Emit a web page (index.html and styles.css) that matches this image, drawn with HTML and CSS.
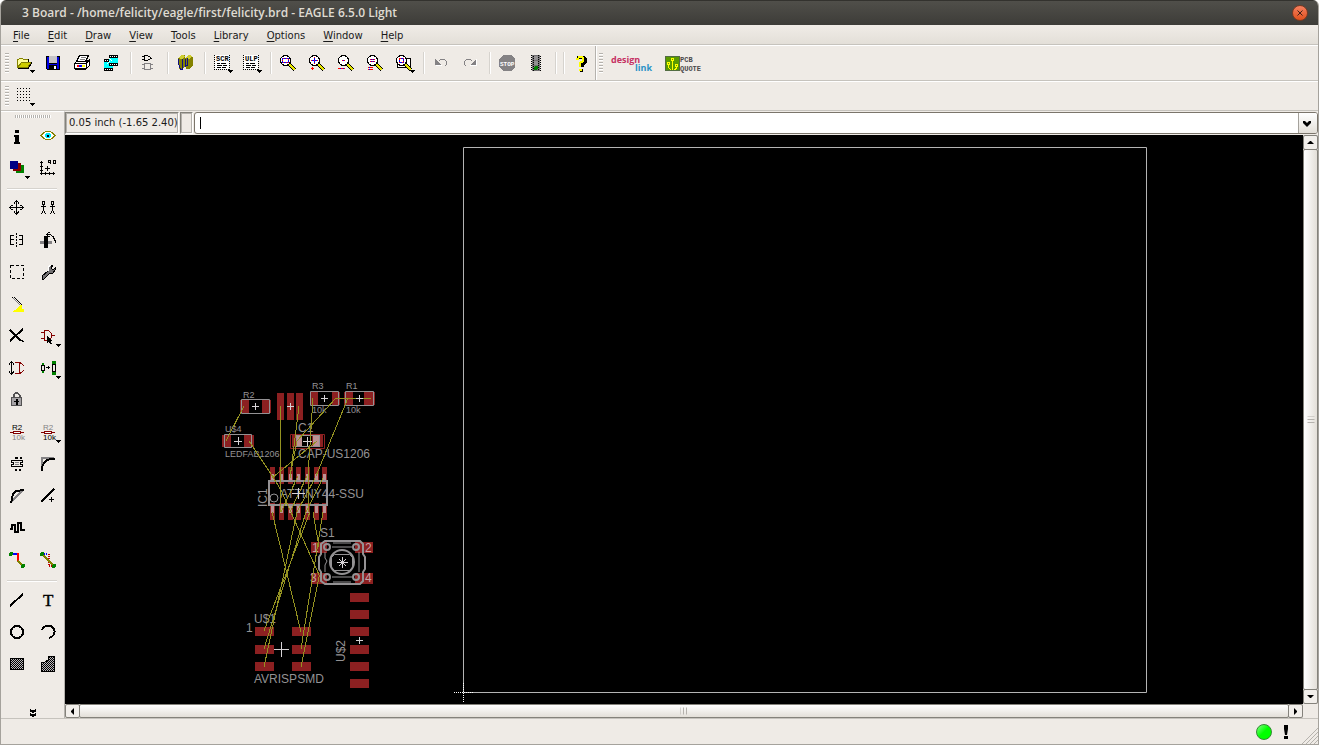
FILE: index.html
```html
<!DOCTYPE html>
<html lang="en">
<head>
  <meta charset="UTF-8">
  <meta name="viewport" content="width=device-width, initial-scale=1.0">
  <title>3 Board - /home/felicity/eagle/first/felicity.brd - EAGLE 6.5.0 Light</title>
  <link rel="stylesheet" href="styles.css">
</head>
<body>
  <div class="window">
    <header class="titlebar">
      <h1>3 Board - /home/felicity/eagle/first/felicity.brd - EAGLE 6.5.0 Light</h1>
      <button class="close" aria-label="Close"><svg width="16" height="16"><path d="M5.5 5.5l5 5m0-5l-5 5" stroke="#3c2018"/></svg></button>
    </header>

    <nav class="menubar">
      <a href="#"><u>F</u>ile</a>
      <a href="#"><u>E</u>dit</a>
      <a href="#"><u>D</u>raw</a>
      <a href="#"><u>V</u>iew</a>
      <a href="#"><u>T</u>ools</a>
      <a href="#"><u>L</u>ibrary</a>
      <a href="#"><u>O</u>ptions</a>
      <a href="#"><u>W</u>indow</a>
      <a href="#"><u>H</u>elp</a>
    </nav>

    <div class="toolbar actions">
      <span class="grip"></span>
      <button aria-label="Open"><svg width="29" height="24"><path d="M7.5 16V8.5h1l1-1h3l1 1h5v3" fill="#ffff9c" stroke="#848200"/><path d="M7.5 16.5l4-5h10l-4 5z" fill="#cece00" stroke="#848200"/><path d="M8 17.5h10l4-6M18.5 8v3" fill="none" stroke="#000"/><path class="dd" d="M20 19h5v1h-1v1h-1v1h-1v-1h-1v-1h-1z"/></svg></button>
      <button aria-label="Save"><svg width="29" height="24"><path d="M7 5h14v14H8l-1-1z" fill="#000"/><path d="M8 6h12v12H8z" fill="#0000e6"/><path d="M10 5h8v7h-8z" fill="#c6c3c6"/><path d="M10 12h8v1h-8zM10 14h8v5h-8z" fill="#000"/><path d="M15 15h2v3h-2z" fill="#fff"/></svg></button>
      <button aria-label="Print"><svg width="29" height="24"><path d="M11.5 4.5h9l-3 6h-9z" fill="#fff" stroke="#000"/><path d="M13 6.5h5M12 8.5h5" stroke="#848284"/><path d="M6.5 12.5l2-2h10l3-2v6l-4 4h-9l-2-1z" fill="#fff" stroke="#000"/><path d="M7 12.5h11l3-3M18.5 12v6M8 17.5h10" fill="none" stroke="#000"/><path d="M9 14h2v2H9z" fill="#f00"/><path d="M11 14h3v2h-3z" fill="#00f"/><path d="M14 14h3v2h-3z" fill="#ff0"/></svg></button>
      <button aria-label="CAM processor"><svg width="29" height="24"><path d="M12 4h9v9h-9zM7 8h9v12H7z" fill="#00ffff"/><path d="M12 4h9v3h-9zM12 12h9v3h-9zM7 8h5v3H7zM7 17h9v3H7z" fill="#000"/><path d="M13 5.5h8M13 13.5h8M8 9.5h4M8 18.5h8" stroke="#fff" stroke-dasharray="1 1"/><path d="M12 7l3 3M13 10l-3 3" stroke="#fff"/></svg></button>
      <i class="sep"></i>
      <button aria-label="Schematic"><svg width="29" height="24"><path d="M10.5 4.5h3l3 2v1l-3 2h-3zM8 5.5h3M8 8.5h3M16 7.5h2" fill="none" stroke="#000"/><path d="M10.5 12.5h6v6h-6zM8 13.5h2M8 17.5h2M17 13.5h2M17 17.5h2" fill="none" stroke="#848284"/></svg></button>
      <i class="sep"></i>
      <button aria-label="Library"><svg width="29" height="24"><path d="M14 7l4-3 4 2v9l-4 3h-3z" fill="#848200"/><path d="M7 7l4-3h3v12l-3 2H8z" fill="#848200"/><path d="M7 7l4-3 3 1-3 3zM14 7l4-3 3 1-3 3z" fill="#cece31"/><path d="M7.5 8v5l2 5h2V8M14.5 8v7l2-1V7" fill="none" stroke="#101084"/></svg></button>
      <i class="sep"></i>
      <button aria-label="Script"><svg width="29" height="24"><path d="M7 4h14v14H7z" fill="#fff"/><path d="M6.5 4v15M21.5 4v15M6 18.5h15" stroke="#000" stroke-dasharray="1 1"/><text class="tag" x="8" y="10">SCR</text><path d="M9 12.5h3m1 0h5M9 14.5h5m1 0h4M9 16.5h4m1 0h4" stroke="#000"/><path class="dd" d="M20 19h5v1h-1v1h-1v1h-1v-1h-1v-1h-1z"/></svg></button>
      <button aria-label="User program"><svg width="29" height="24"><path d="M7 4h14v14H7z" fill="#fff"/><path d="M6.5 4v15M21.5 4v15M6 18.5h15" stroke="#000" stroke-dasharray="1 1"/><text class="tag" x="8" y="10">ULP</text><path d="M9 12.5h3m1 0h5M9 14.5h5m1 0h4M9 16.5h4m1 0h4" stroke="#000"/><path class="dd" d="M20 19h5v1h-1v1h-1v1h-1v-1h-1v-1h-1z"/></svg></button>
      <i class="sep"></i>
      <button aria-label="Zoom to fit"><svg width="29" height="24"><path d="M15 13l6 6" stroke="#000" stroke-width="4"/><path d="M15 13l6 6" stroke="#e6e600" stroke-width="2"/><circle cx="11.5" cy="9.5" r="5" fill="#fff" stroke="#000"/><path d="M8.5 7.5h6v4h-6z" fill="none" stroke="#00f"/><path d="M8.5 7.5h6v4h-6z" fill="none" stroke="#f00" stroke-dasharray="1 2"/></svg></button>
      <button aria-label="Zoom in"><svg width="29" height="24"><path d="M15 13l6 6" stroke="#000" stroke-width="4"/><path d="M15 13l6 6" stroke="#e6e600" stroke-width="2"/><circle cx="11.5" cy="9.5" r="5" fill="#fff" stroke="#000"/><path d="M8 9.5h7M11.5 6v7" stroke="#00f"/><path d="M8 9.5h7M11.5 6v7" stroke="#f00" stroke-dasharray="1 2"/><path d="M8 17.5h3M9.5 16v3" stroke="#f00"/></svg></button>
      <button aria-label="Zoom out"><svg width="29" height="24"><path d="M15 13l6 6" stroke="#000" stroke-width="4"/><path d="M15 13l6 6" stroke="#e6e600" stroke-width="2"/><circle cx="11.5" cy="9.5" r="5" fill="#fff" stroke="#000"/><path d="M10 9.5h3M6 17.5h7" stroke="#f00"/><path d="M11 9.5h1M8 17.5h1m2 0h1" stroke="#00f"/></svg></button>
      <button aria-label="Redraw"><svg width="29" height="24"><path d="M15 13l6 6" stroke="#000" stroke-width="4"/><path d="M15 13l6 6" stroke="#e6e600" stroke-width="2"/><circle cx="11.5" cy="9.5" r="5" fill="#fff" stroke="#000"/><path d="M9 8.5h5M9 10.5h5M7 16.5h5M7 18.5h5" stroke="#f00"/><path d="M10 8.5h1m1 0h1M10 10.5h1m1 0h1M8 16.5h1M8 18.5h1" stroke="#00f"/></svg></button>
      <button aria-label="Zoom select"><svg width="29" height="24"><path d="M14.5 7.5h6v9h-13v-5h7z" fill="#fff" stroke="#000"/><path d="M15 13l6 6" stroke="#000" stroke-width="4"/><path d="M15 13l6 6" stroke="#e6e600" stroke-width="2"/><circle cx="11.5" cy="9.5" r="5" fill="#fff" stroke="#000"/><path d="M9.5 7.5h4v4h-4z" fill="none" stroke="#00f"/><path d="M9.5 7.5h4v4h-4z" fill="none" stroke="#f00" stroke-dasharray="1 2"/><path class="dd" d="M20 19h5v1h-1v1h-1v1h-1v-1h-1v-1h-1z"/></svg></button>
      <i class="sep"></i>
      <button aria-label="Undo"><svg width="29" height="24"><path d="M9 14.5h6" stroke="#fff"/><path d="M11.5 10.5l2-2h4l2 2v3l-2 2" fill="none" stroke="#848284"/><path d="M8 8v6h6z" fill="#848284"/></svg></button>
      <button aria-label="Redo"><svg width="29" height="24"><path d="M14 14.5h7M20.5 8v7" stroke="#fff"/><path d="M16.5 10.5l-2-2h-4l-2 2v3l2 2" fill="none" stroke="#848284"/><path d="M20 8v6h-6z" fill="#848284"/></svg></button>
      <i class="sep"></i>
      <button aria-label="Stop"><svg width="29" height="24"><path d="M10 4h8l4 4v8l-4 4h-8l-4-4V8z" fill="#848284"/><text class="stop" x="7" y="15">STOP</text></svg></button>
      <button aria-label="Go"><svg width="29" height="24"><path d="M10 4h8v16h-8z" fill="#737173"/><path d="M9.5 4v16M11.5 5v15M16.5 4v16M18.5 5v15" stroke="#000" stroke-dasharray="1 1"/><path d="M12 5h4v4h-4zM12 10h4v4h-4z" fill="#949294"/><circle cx="14" cy="17" r="2" fill="#008200"/></svg></button>
      <i class="sep"></i><i class="sep"></i>
      <button aria-label="Help"><svg width="29" height="24"><path d="M10 7l2-1h4l2 2v3l-3 3v2M13 19h3" fill="none" stroke="#000" stroke-width="3"/><path d="M9 8h2l1-2h3l1 1v3l-3 2v4M12 18.5h3" fill="none" stroke="#ff0" stroke-width="2"/></svg></button>
      <span class="bar-end"></span>
      <span class="grip"></span>
      <button class="link" aria-label="designlink"><svg width="50" height="24"><text class="design" x="6" y="12">design</text><text class="linkword" x="30" y="20">link</text></svg></button>
      <button class="quote" aria-label="PCB quote"><svg width="44" height="24"><path d="M3 5h15v15H3z" fill="#526d42"/><path d="M4 6h13v13H4z" fill="#5a9a00"/><path d="M10.5 9v10M6.5 13v3l2 3M14.5 15v2l-2 2" fill="none" stroke="#ff0"/><path d="M9.5 7.5h2v2h-2zM5.5 11.5h2v2h-2zM13.5 13.5h2v2h-2z" fill="#5a9a00" stroke="#ff0"/><text class="tag grey" x="18" y="11">PCB</text><text class="tag grey" x="18" y="20">QUOTE</text></svg></button>
    </div>

    <div class="toolbar params">
      <span class="grip"></span>
      <button aria-label="Grid"><svg width="29" height="24"><path d="M7 4.5h14M7 7.5h14M7 10.5h14M7 13.5h14M7 16.5h14" stroke="#000" stroke-dasharray="1 2"/><path class="dd" d="M20 19h5v1h-1v1h-1v1h-1v-1h-1v-1h-1z"/></svg></button>
    </div>

    <main>
      <aside class="palette">
        <span class="hgrip"></span>
        <div class="tools">
          <button aria-label="Info"><svg width="31" height="32"><path d="M14 10h4v3h-4zM13 15h5v7h1v2h-6v-2h1v-5h-1z"/></svg></button>
          <button aria-label="Show"><svg width="31" height="32"><path d="M8 15.5h1l3-3 2-1h4l2 1 3 3-3 3-2 1h-4l-2-1-3-3" fill="#fff" stroke="#848200"/><circle cx="16" cy="15.5" r="3" fill="#00e6ff"/><path d="M15 15h2v2h-2z"/></svg></button>
          <button aria-label="Display"><svg width="31" height="32"><path d="M15 13h8v8h-8z" fill="#008200"/><path d="M12 11h8v8h-8z" fill="#840000"/><path d="M9 9h8v8H9z" fill="#000084"/><path class="dd" d="M24 24h5v1h-1v1h-1v1h-1v-1h-1v-1h-1z"/></svg></button>
          <button aria-label="Mark"><svg width="31" height="32"><path d="M9.5 9v14M8 21.5h15M8 10.5h3M8 14.5h3M8 18.5h3M13.5 20v3M17.5 20v3M21.5 20v3M13 16.5h5M15.5 14v5M18.5 12V8.5h-2v2h2M21.5 8.5h2v3h-2z" fill="none" stroke="#000"/></svg></button>
          <i class="rule"></i>
          <button aria-label="Move"><svg width="31" height="32"><path d="M8 15.5h15M15.5 8v15M13 11.5l2.5-3 2.5 3M13 19.5l2.5 3 2.5-3M11.5 13l-3 2.5 3 2.5M19.5 13l3 2.5-3 2.5" fill="none" stroke="#000"/></svg></button>
          <button aria-label="Copy"><svg width="31" height="32"><path d="M10.5 9.5h2v3h-2zM9 14.5h5M11.5 13v5l-2 4M11.5 18l2 4M19.5 9.5h2v3h-2zM18 14.5h5M20.5 13v5l-2 4M20.5 18l2 4" fill="none" stroke="#000"/></svg></button>
          <button aria-label="Mirror"><svg width="31" height="32"><path d="M15.5 9v15" stroke="#000" stroke-dasharray="2 1"/><path d="M13 11.5H9.5v9H13M9 15.5h4M18 11.5h3.5v9H18M18 15.5h4" fill="none" stroke="#000"/></svg></button>
          <button aria-label="Rotate"><svg width="31" height="32"><path d="M8 17h12v3H8z" fill="#848284"/><path d="M12 12h4v12h-4z"/><path d="M14 10.5h4l3 2 2 4v2M17.5 8l-3 2.5 3 2.5" fill="none" stroke="#000"/></svg></button>
          <button aria-label="Group"><svg width="31" height="32"><path d="M9.5 9.5h13v13h-13z" fill="none" stroke="#000" stroke-dasharray="3 2"/></svg></button>
          <button aria-label="Change"><svg width="31" height="32"><path d="M10 20l6-5v-4l3-2h2l-2 3 2 2 2-2v2l-2 3h-3l-6 6h-2z" fill="#737173" stroke="#000"/><path d="M16 15v-4l3-2" fill="none" stroke="#fff"/></svg></button>
          <button aria-label="Paste"><svg width="31" height="32"><path d="M11.5 9.5l9 9M13.5 9.5l8 8" stroke="#000"/><path d="M12.5 10.5l8 8" stroke="#848284"/><path d="M19 17h2v4h2v3H12v-1l4-2z" fill="#ff0"/></svg></button>
          <span></span>
          <button aria-label="Delete"><svg width="31" height="32"><path d="M9 10l11 11" stroke="#000" stroke-width="2"/><path d="M22 9L9 21" stroke="#000" stroke-width="2"/><path d="M20 20l3 2" stroke="#000"/></svg></button>
          <button aria-label="Add"><svg width="31" height="32"><path d="M9 12.5h3M9 18.5h3M12.5 10.5h4l3 3v4l-3 3h-4zM20 15.5h3" fill="none" stroke="#840000"/><path d="M15 16v7l2-1 1 2h2l-1-3h2z"/><path class="dd" d="M24 24h5v1h-1v1h-1v1h-1v-1h-1v-1h-1z"/></svg></button>
          <button aria-label="Pinswap"><svg width="31" height="32"><path d="M10.5 10v12M8 12.5l2.5-3 2.5 3M8 19.5l2.5 3 2.5-3" fill="none" stroke="#000"/><path d="M14 10.5h5l4 3M14 21.5h5l4-3M18.5 10v12" fill="none" stroke="#840000"/></svg></button>
          <button aria-label="Replace"><svg width="31" height="32"><path d="M9.5 13.5h3v5h-3zM20.5 12.5h3v7h-3zM14 15.5h4M16.5 14v3" fill="none" stroke="#000"/><path d="M10 11h2v2h-2zM10 19h2v2h-2zM20 9h4v3h-4zM20 20h4v3h-4z" fill="#008200"/><path class="dd" d="M24 24h5v1h-1v1h-1v1h-1v-1h-1v-1h-1z"/></svg></button>
          <button aria-label="Lock"><svg width="31" height="32"><path d="M12.5 14v-3l2-2h2l2 2v3" fill="none" stroke="#525152" stroke-width="2"/><path d="M10.5 13.5h10v8h-10z" fill="#a5a2a5" stroke="#525152"/><path d="M15 15h2v6h-2zM13 17h5v1h-5z"/></svg></button>
          <span></span>
          <button aria-label="Name"><svg width="31" height="32"><text class="part" x="11" y="14">R2</text><text class="part grey" x="11" y="24">10k</text><path d="M9 16.5h14" stroke="#840000"/><path d="M12.5 15.5h7v2h-7z" fill="#fff" stroke="#840000"/></svg></button>
          <button aria-label="Value"><svg width="31" height="32"><text class="part grey" x="11" y="14">R2</text><text class="part" x="11" y="24">10k</text><path d="M9 16.5h14" stroke="#840000"/><path d="M12.5 15.5h7v2h-7z" fill="#fff" stroke="#840000"/><path class="dd" d="M24 24h5v1h-1v1h-1v1h-1v-1h-1v-1h-1z"/></svg></button>
          <button aria-label="Smash"><svg width="31" height="32"><path d="M10.5 12.5h11v2h-2v2h2v2h-11v-2h2v-2h-2z" fill="none" stroke="#000"/><path d="M14 9.5h3m2 0h2M14 21.5h2m2 0h2" stroke="#000" stroke-width="2"/><path d="M14 14.5h4M14 16.5h4" stroke="#848284"/></svg></button>
          <button aria-label="Miter"><svg width="31" height="32"><path d="M10 22V10h12" fill="none" stroke="#848284" stroke-width="2"/><path d="M10 23v-3c1-5 4-8 8-9h5" fill="none" stroke="#000" stroke-width="2"/></svg></button>
          <button aria-label="Split"><svg width="31" height="32"><path d="M10 22L22 10" stroke="#848284" stroke-width="2"/><path d="M10 23l2-9 3-3 8-1" fill="none" stroke="#000" stroke-width="2"/></svg></button>
          <button aria-label="Optimize"><svg width="31" height="32"><path d="M9 22L22 9" stroke="#000" stroke-width="2"/><path d="M17 19.5h5M19.5 17v5" stroke="#000"/></svg></button>
          <button aria-label="Meander"><svg width="31" height="32"><path d="M9 17h2v-4h3v7h3v-9h3v7h4" fill="none" stroke="#000" stroke-width="2"/></svg></button>
          <span></span>
          <button aria-label="Route"><svg width="31" height="32"><path d="M10 10h6" stroke="#00f" stroke-width="2"/><path d="M17 9v8" stroke="#f00" stroke-width="2"/><path d="M17 17l5 5" stroke="#848200" stroke-width="2"/><circle cx="10" cy="10" r="2" fill="#008200"/><circle cx="22" cy="22" r="2" fill="#008200"/></svg></button>
          <button aria-label="Ripup"><svg width="31" height="32"><path d="M10 10h6" stroke="#00f" stroke-width="2" stroke-dasharray="1 1"/><path d="M17 10v12h5" fill="none" stroke="#c00000" stroke-width="2" stroke-dasharray="1 1"/><path d="M10 10l12 12" stroke="#848200" stroke-width="2"/><circle cx="10" cy="10" r="2" fill="#008200"/><circle cx="22" cy="22" r="2" fill="#008200"/></svg></button>
          <i class="rule"></i>
          <button aria-label="Wire"><svg width="31" height="32"><path d="M9 22L22 10" stroke="#000" stroke-width="2"/></svg></button>
          <button aria-label="Text"><svg width="31" height="32"><text class="letter" x="11" y="22">T</text></svg></button>
          <button aria-label="Circle"><svg width="31" height="32"><circle cx="16" cy="16" r="6" fill="none" stroke="#000" stroke-width="2"/></svg></button>
          <button aria-label="Arc"><svg width="31" height="32"><path d="M10 14c2-5 9-6 12-1 2 4-1 8-5 9" fill="none" stroke="#000" stroke-width="2"/></svg></button>
          <button aria-label="Rectangle"><svg width="31" height="32"><defs><pattern id="dots" width="2" height="2" patternUnits="userSpaceOnUse"><path d="M0 0h2v2H0z" fill="#bdbabd"/><path d="M0 0h1v1H0zM1 1h1v1H1z" fill="#000"/></pattern></defs><path d="M9.5 10.5h13v11h-13z" fill="url(#dots)" stroke="#000"/></svg></button>
          <button aria-label="Polygon"><svg width="31" height="32"><path d="M9.5 23.5v-9h3l4-3v-3h6v15z" fill="url(#dots)" stroke="#000"/></svg></button>
        </div>
        <button class="more" aria-label="More tools"><svg width="31" height="12"><path d="M13 4l3 2 3-2M13 8l3 2 3-2" fill="none" stroke="#000" stroke-width="2"/></svg></button>
      </aside>

      <section class="editor">
        <div class="command">
          <output class="coords">0.05 inch (-1.65 2.40)</output>
          <span class="slot"></span>
          <div class="combo">
            <span class="caret"></span>
            <input type="text" aria-label="Command">
            <button aria-label="History"><svg width="18" height="20"><path d="M4 8h2l2 2 2-2h2v2l-4 4-4-4z"/></svg></button>
          </div>
        </div>

        <div class="workspace">
          <div class="canvas">
            <svg class="board" width="1238" height="569" viewBox="65 135 1238 569">
              <!-- board outline and origin -->
              <path d="M463.5 147.5h683v545h-683z" fill="none" stroke="#b4b4b4"/>
              <path d="M454 692.5h20M463.5 683v20" stroke="#fff" stroke-dasharray="1 1"/>

              <!-- pads -->
              <g class="pads">
                <path d="M240 400h9v13h-9zM262 400h9v13h-9z"/>
                <path d="M277 393h7v27h-7zM287 393h7v27h-7zM296 393h7v27h-7z"/>
                <path d="M310 392h8v13h-8zM332 392h8v13h-8zM344 392h9v13h-9zM364 392h11v13h-11z"/>
                <path d="M222 435h9v12h-9zM244 435h10v12h-10zM292 435h10v12h-10zM312 435h11v12h-11z"/>
                <path d="M270 467h5v17h-5zM279 467h5v17h-5zM288 467h5v17h-5zM296 467h5v17h-5zM305 467h5v17h-5zM314 467h5v17h-5zM322 467h5v17h-5z"/>
                <path d="M270 503h5v17h-5zM279 503h5v17h-5zM288 503h5v17h-5zM296 503h5v17h-5zM305 503h5v17h-5zM314 503h5v17h-5zM322 503h5v17h-5z"/>
                <path d="M311 542h16v11h-16zM311 573h16v11h-16zM355 542h18v11h-18zM355 573h18v11h-18z"/>
                <path d="M255 627h19v9h-19zM255 645h19v9h-19zM255 662h19v9h-19zM292 627h19v9h-19zM292 645h19v9h-19zM292 662h19v9h-19z"/>
                <path d="M350 593h19v9h-19zM350 610h19v9h-19zM350 627h19v9h-19zM350 645h19v9h-19zM350 662h19v9h-19zM350 679h19v9h-19z"/>
              </g>
              <path d="M290.5 434.5h34v14h-34z" fill="none" stroke="#8c2021"/>
              <g fill="#bd9294">
                <path d="M296 435h6v12h-6zM313 435h7v12h-7z"/>
                <path d="M271 474h3v6h-3zM280 474h3v6h-3zM289 474h3v6h-3zM297 474h3v6h-3zM306 474h3v6h-3zM315 474h3v6h-3zM323 474h3v6h-3z"/>
                <path d="M271 506h3v7h-3zM280 506h3v7h-3zM289 506h3v7h-3zM297 506h3v7h-3zM306 506h3v7h-3zM315 506h3v7h-3zM323 506h3v7h-3z"/>
              </g>

              <!-- package outlines -->
              <g class="outline">
                <path d="M241.5 399.5h28v14h-28zM310.5 391.5h28v14h-28zM345.5 391.5h28v14h-28zM224.5 434.5h27v13h-27zM296.5 435.5h23v11h-23z"/>
                <path d="M269 481h58v24h-58z" stroke-width="2"/>
                <circle cx="274" cy="498" r="4"/>
                <path d="M325 541h35l3 3v10l2 3v12l-2 3v9l-3 3h-35l-4-3v-9l-2-3v-12l2-3v-10z" stroke-width="2"/>
                <path d="M333 543h18M332 547h20M332 577h20M333 582h18M325 552v6l2 3-2 4v7M359 552v20"/>
                <path d="M334.5 554.5h15l3 3v10l-3 3h-15l-3-3v-10z"/>
                <circle cx="342" cy="562" r="12" stroke-width="2"/>
                <g stroke-width="2"><circle cx="327" cy="547" r="3"/><circle cx="356" cy="547" r="3"/><circle cx="327" cy="577" r="3"/><circle cx="356" cy="577" r="3"/></g>
              </g>

              <!-- names and values -->
              <g class="small">
                <text x="243" y="398">R2</text>
                <text x="312" y="389">R3</text>
                <text x="346" y="389">R1</text>
                <text x="312" y="413">10k</text>
                <text x="346" y="413">10k</text>
                <text x="225" y="432">U$4</text>
                <text x="225" y="457">LEDFAB1206</text>
              </g>
              <g class="label">
                <text x="298" y="432">C1</text>
                <text x="298" y="458">CAP-US1206</text>
                <text x="280" y="498">ATTINY44-SSU</text>
                <text transform="translate(267 507) rotate(-90)">IC1</text>
                <text x="320" y="537">S1</text>
                <text x="254" y="623">U$1</text>
                <text x="246" y="632">1</text>
                <text x="254" y="683">AVRISPSMD</text>
                <text transform="translate(345 662) rotate(-90)">U$2</text>
              </g>
              <g class="label pin">
                <text x="312" y="552">1</text>
                <text x="365" y="552">2</text>
                <text x="310" y="582">3</text>
                <text x="365" y="582">4</text>
              </g>

              <!-- airwires -->
              <path class="airwire" d="M244 406L226 441M280 406V512M299 406L290 478M313 398L308 476V512M371 398H336L297 441L290 476M348 398L316 476M249 441L271 474L281 490L320 577M317 441L272 478M272 512L301 632M315 478L297 512L264 667M323 478L306 512L264 649M310 512L264 631M323 512L301 649M313 512L319 547M319 577L301 667M298 476L281 512M307 476L290 512"/>

              <!-- part origins -->
              <path class="origin" d="M252 406.5h7M255.5 403v7M287 406.5h7M290.5 403v7M321 398.5h7M324.5 395v7M356 398.5h7M359.5 395v7M234 441.5h8M238.5 437v8M303 441.5h9M307.5 437v9M292 493.5h13M298.5 488v11M337 562.5h11M342.5 557v11M339 559l7 7m0-7l-7 7M274 649.5h15M281.5 642v15M356 640.5h7M359.5 637v7"/>
            </svg>
          </div>
          <div class="scroll vertical">
            <button aria-label="Scroll up"><svg width="13" height="13"><path d="M3 8h7L7 5H6z"/></svg></button>
            <span class="thumb"></span>
            <button aria-label="Scroll down"><svg width="13" height="13"><path d="M3 5h7L7 8H6z"/></svg></button>
          </div>
          <div class="scroll horizontal">
            <button aria-label="Scroll left"><svg width="13" height="12"><path d="M8 3v7L5 7V6z"/></svg></button>
            <span class="thumb"></span>
            <button aria-label="Scroll right"><svg width="13" height="12"><path d="M5 3v7l3-3V6z"/></svg></button>
          </div>
        </div>
      </section>
    </main>

    <footer class="statusbar">
      <span class="lamp"></span>
      <svg class="alert" width="8" height="16"><path d="M2 1h4v4L5 11H3L2 5zM2 12h4v3H2z"/></svg>
      <svg class="resize" width="16" height="16"><path d="M0 16L16 0M4 16L16 4M8 16l8-8M12 16l4-4" stroke="#b5b2ad"/></svg>
    </footer>
  </div>
</body>
</html>
```
FILE: styles.css
```css
* {
  box-sizing: border-box;
}

body {
  margin: 0;
  background: #fff;
  color: #1a1a1a;
  font-family: "DejaVu Sans", sans-serif;
  font-size: 10px;
}

button {
  margin: 0;
  padding: 0;
  border: 0;
  background: none;
}

svg {
  display: block;
}

.window {
  display: flex;
  flex-direction: column;
  height: 100vh;
  overflow: hidden;
  border: solid #a5a29c;
  border-width: 0 1px 1px;
  border-radius: 6px 6px 0 0;
  background: #efebe6;
}

/* title bar and menu */
.titlebar {
  display: flex;
  align-items: center;
  justify-content: space-between;
  height: 25px;
  padding: 0 10px 0 21px;
  border-top: 1px solid #33322e;
  background: linear-gradient(#504f4a, #3d3c38);
}

.titlebar h1 {
  margin: 0;
  color: #dfdbd2;
  font: 600 12px/22px "Open Sans", sans-serif;
}

.close {
  width: 16px;
  height: 16px;
  border: 1px solid #7a3a22;
  border-radius: 50%;
  background: linear-gradient(#f58060, #e0501c);
}

.close svg {
  margin: -1px;
}

.menubar {
  display: flex;
  height: 20px;
  padding-left: 3px;
  border-bottom: 1px solid #c6c3bd;
  background: linear-gradient(#f0ece7, #e3dfd8);
}

.menubar a {
  padding: 0 9px;
  color: #1a1a1a;
  line-height: 21px;
  text-decoration: none;
}

.menubar u {
  text-underline-offset: 2px;
}

/* toolbars */
.toolbar {
  display: flex;
  align-items: center;
  border-top: 1px solid #fff;
  border-bottom: 1px solid #c6c3bd;
}

.actions {
  height: 36px;
}

.params {
  height: 30px;
}

.toolbar svg,
.palette svg {
  shape-rendering: crispEdges;
}

.grip {
  width: 4px;
  height: 20px;
  margin: 0 1px 0 4px;
  background: repeating-linear-gradient(#b5b2ad 0 1px, #fff 1px 2px, #efebe6 2px 3px);
}

.sep {
  width: 8px;
  height: 22px;
  background: linear-gradient(90deg, transparent 4px, #d6d3ce 4px 5px, #fff 5px 6px, transparent 6px);
}

.bar-end {
  align-self: stretch;
  width: 2px;
  margin-left: -1px;
  border-left: 1px solid #b5b2ad;
  border-right: 1px solid #fff;
}

.bar-end + .grip {
  margin: 0 0 0 2px;
}

.link {
  margin-left: 2px;
}

.quote {
  margin-left: 7px;
}

.tag {
  font: bold 7px "Liberation Mono", monospace;
}

.stop {
  fill: #fff;
  font: bold 6px "Liberation Mono", monospace;
}

.grey {
  fill: #848284;
}

.tag.grey {
  fill: #4a494a;
}

.design {
  fill: #c63163;
  font: bold 9px "Open Sans", sans-serif;
}

.linkword {
  fill: #2992c6;
  font: bold 9px "Open Sans", sans-serif;
}

/* tool palette */
main {
  display: flex;
  flex: 1;
  min-height: 0;
}

.palette {
  display: flex;
  flex-direction: column;
  width: 64px;
  border-top: 1px solid #fff;
  border-right: 1px solid #b5b2ad;
}

.hgrip {
  width: 36px;
  height: 3px;
  margin: 3px 0 2px 14px;
  background: repeating-linear-gradient(90deg, #b5b2ad 0 1px, #fff 1px 2px);
}

.tools {
  display: grid;
  grid-template-columns: 31px 31px;
  grid-auto-rows: auto;
}

.rule {
  grid-column: 1 / -1;
  height: 8px;
  margin: 0 6px;
  background: linear-gradient(transparent 4px, #d6d3ce 4px 5px, #fff 5px 6px, transparent 6px);
}

.part {
  font: 8px "Liberation Sans", sans-serif;
}

.letter {
  font: 17px "Liberation Serif", serif;
  stroke: #000;
  stroke-width: 0.4;
}

.more {
  align-self: center;
  margin-top: auto;
}

/* command line */
.editor {
  display: flex;
  flex: 1;
  flex-direction: column;
  min-width: 0;
}

.command {
  display: flex;
  gap: 1px;
  height: 24px;
  padding: 1px 0;
}

.coords,
.slot {
  border: 1px solid;
  border-color: #84827b #fff #fff #84827b;
  box-shadow: inset 1px 1px #b5b2ad, inset -1px -1px #b5b2ad;
}

.coords {
  width: 114px;
  padding-left: 3px;
  line-height: 20px;
  white-space: nowrap;
}

.slot {
  width: 13px;
}

.combo {
  display: flex;
  flex: 1;
  align-items: center;
  border: 1px solid #7b756b;
  border-radius: 3px;
  background: #fff;
  overflow: hidden;
}

.caret {
  width: 1px;
  height: 12px;
  margin-left: 5px;
  background: #000;
}

.combo input {
  flex: 1;
  min-width: 0;
  border: 0;
  outline: 0;
  background: none;
  font: inherit;
}

.combo button {
  border-left: 1px solid #a5a29c;
  background: linear-gradient(#fff, #e3dfd8);
}

/* drawing area */
.workspace {
  display: grid;
  flex: 1;
  grid-template: minmax(0, 1fr) 14px / minmax(0, 1fr) 15px;
  min-height: 0;
}

.canvas {
  overflow: hidden;
  background: #000;
}

.pads {
  fill: #8c2021;
}

.outline {
  fill: none;
  stroke: #949294;
}

.small,
.label {
  fill: #949294;
  font: 9px "Liberation Sans", sans-serif;
}

.label {
  font-size: 12px;
}

.pin {
  fill: #c6a2a5;
}

.airwire {
  fill: none;
  stroke: #949221;
  shape-rendering: crispEdges;
}

.origin {
  stroke: #d6d3d6;
}

.scroll {
  display: flex;
  background: #d6d3ce;
}

.vertical {
  flex-direction: column;
}

.scroll button,
.thumb {
  border: 1px solid #84827b;
  border-radius: 2px;
  background: #f2efeb;
}

.thumb {
  position: relative;
  flex: 1;
}

.horizontal .thumb {
  margin: 0 -1px;
  background: linear-gradient(#fff, #e3dfd8);
}

.vertical .thumb {
  margin: -1px 0;
  background: linear-gradient(90deg, #fff, #e3dfd8);
}

.thumb::after {
  position: absolute;
  top: 50%;
  left: 50%;
  width: 7px;
  height: 7px;
  background: repeating-linear-gradient(90deg, #b5b2ad 0 1px, transparent 1px 3px);
  content: "";
  transform: translate(-50%, -50%);
}

.vertical .thumb::after {
  background: repeating-linear-gradient(#b5b2ad 0 1px, transparent 1px 3px);
}

/* status bar */
.statusbar {
  display: flex;
  align-items: center;
  justify-content: flex-end;
  height: 26px;
  border-top: 1px solid #c6c3bd;
}

.lamp {
  width: 16px;
  height: 16px;
  border: 1px solid #318a31;
  border-radius: 50%;
  background: linear-gradient(135deg, #8f8, #0f0 50%);
}

.alert {
  margin: 0 12px 0 10px;
}

.resize {
  align-self: flex-end;
}
```
